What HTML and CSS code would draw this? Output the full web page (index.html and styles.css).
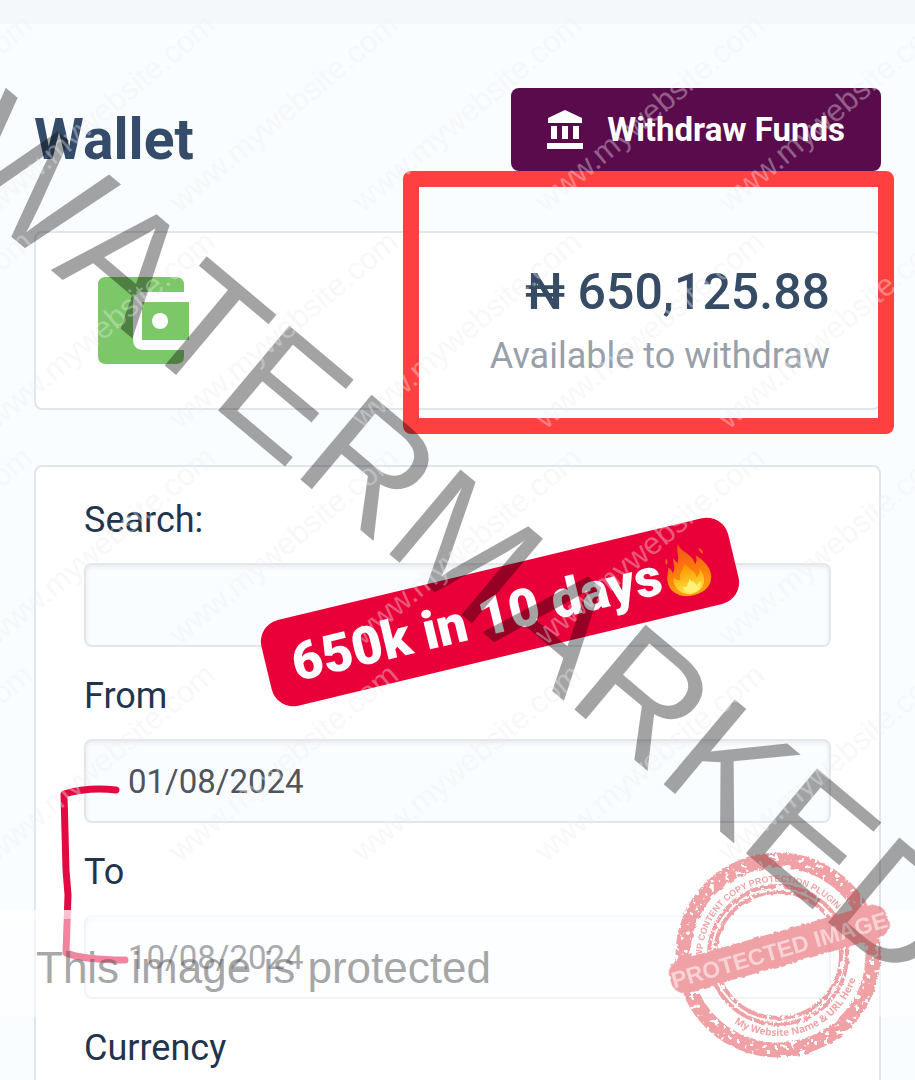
FILE: index.html
```html
<!DOCTYPE html>
<html lang="en">
<head>
<meta charset="utf-8">
<meta name="viewport" content="width=device-width, initial-scale=1">
<title>Wallet</title>
<link rel="stylesheet" href="styles.css">
</head>
<body>
<div class="page">
  <div class="topbar"></div>
  <main class="content">
    <header class="head">
      <h1 class="title">Wallet</h1>
      <button class="withdraw" type="button">
        <svg class="bank" viewBox="0 0 36 40" aria-hidden="true"><path fill="#fff" d="M18 0 35 8v5H1V8zM4 16h6v13H4zm11 0h6v13h-6zM26 16h6v13h-6zM0 33h36v6H0z"/></svg>
        <span>Withdraw Funds</span>
      </button>
    </header>
    <section class="card balance">
      <svg class="wallet" viewBox="0 0 92 87" aria-hidden="true"><path fill="#7cc767" d="M8 0h70q8 0 8 8v7H46q-11 0-11 11v36q0 11 11 11h40v6q0 8-8 8H8q-8 0-8-8V8q0-8 8-8z"/><path fill="#7cc767" fill-rule="evenodd" d="M44 25h47v38H44zM62 36a8 8 0 1 0 .1 0z"/></svg>
      <div class="sum">
        <strong class="amount">₦ 650,125.88</strong>
        <span class="note">Available to withdraw</span>
      </div>
    </section>
    <form class="card filters">
      <label for="q">Search:</label>
      <input id="q" type="text">
      <label for="from">From</label>
      <input id="from" type="text" value="01/08/2024">
      <label for="to">To</label>
      <input id="to" type="text" value="10/08/2024">
      <label for="cur">Currency</label>
      <input id="cur" type="text">
    </form>
  </main>
  <div class="frame"></div>
  <div class="sticker"><span>650k in 10 days</span>
    <svg class="fire" viewBox="0 0 46 54" aria-hidden="true">
      <defs><linearGradient id="fl" x1="0" y1="0" x2="0" y2="1"><stop offset="0" stop-color="#f4511e"/><stop offset=".55" stop-color="#fb7d0c"/><stop offset="1" stop-color="#fda50f"/></linearGradient>
      <linearGradient id="core" x1="0" y1="0" x2="0" y2="1"><stop offset="0" stop-color="#fb8c00"/><stop offset=".6" stop-color="#ffc21f"/><stop offset="1" stop-color="#ffe95a"/></linearGradient></defs>
      <path fill="url(#fl)" d="M20 0c-1 8 12 13 12 24 3-3 3-6 2-9 6 6 11 13 11 21 0 11-9 18-22 18S1 46 1 36c0-7 3-10 4-15 2 2 3 4 3 7 5-6 2-10 4-15 1 3 2 4 3 6 4-7 1-12 5-19zM39 9c3 2 4 4 3 7-2-2-3-4-3-7zM5 12c-2 2-2 4-1 6 2-2 2-4 1-6z"/>
      <path fill="url(#core)" d="M22 20c1 8 9 9 8 17 3-1 5-4 5-8 6 11 0 23-12 23S4 41 8 32c2 2 3 4 6 4-1-7 6-9 8-16z"/>
      <path fill="#fff176" d="M23 36c0 5 5 4 5 9 3-1 4-2 5-4 0 7-4 10-10 10s-9-4-8-8c1 1 2 1 4 1 0-3 4-4 4-8z"/>
    </svg>
  </div>
  <svg class="marks" width="915" height="1080" viewBox="0 0 915 1080">
    <defs>
      <filter id="worn" x="-5%" y="-5%" width="110%" height="110%">
        <feTurbulence type="fractalNoise" baseFrequency=".2" numOctaves="2" seed="4" result="n"/>
        <feDisplacementMap in="SourceGraphic" in2="n" scale="5" result="d"/>
        <feColorMatrix in="n" type="matrix" values="0 0 0 0 0  0 0 0 0 0  0 0 0 0 0  0 0 0 -16 10.600" result="h"/>
        <feComposite in="d" in2="h" operator="in"/>
      </filter>
      <filter id="rough" x="-5%" y="-15%" width="110%" height="130%">
        <feTurbulence type="fractalNoise" baseFrequency=".25" numOctaves="2" seed="8" result="n"/>
        <feDisplacementMap in="SourceGraphic" in2="n" scale="4"/>
      </filter>
      <path id="arcTop" d="M702 958A76 76 0 1 1 853 970"/>
      <path id="arcLow" d="M734 1023A81 81 0 0 0 859 950"/>
      <g id="row">
        <text transform="translate(-186 213) rotate(-40)">www.mywebsite.com</text>
        <text transform="translate(-3 213) rotate(-40)">www.mywebsite.com</text>
        <text transform="translate(180 213) rotate(-40)">www.mywebsite.com</text>
        <text transform="translate(363 213) rotate(-40)">www.mywebsite.com</text>
        <text transform="translate(546 213) rotate(-40)">www.mywebsite.com</text>
        <text transform="translate(729 213) rotate(-40)">www.mywebsite.com</text>
      </g>
    </defs>
    <path class="pen" d="M116 790Q88 787 64 794L66 870 68 895 66 953Q84 960 125 960"/>
    <rect class="veil" y="910" width="915" height="107"/>
    <rect class="veil" y="910" width="915" height="9"/>
    <text class="big" transform="translate(-66 172) rotate(40)">WATERMARKED</text>
    <g class="tiles">
      <use href="#row"/><use href="#row" y="217"/><use href="#row" y="433"/><use href="#row" y="650"/>
    </g>
    <text class="notice" x="36" y="983">This image is protected</text>
    <g class="stamp">
      <circle class="ring" cx="778" cy="955" r="95" filter="url(#worn)"/>
      <circle class="thin" cx="778" cy="955" r="69" filter="url(#worn)"/>
      <circle class="thin" cx="778" cy="955" r="63" filter="url(#worn)"/>
      <text class="plugin"><textPath href="#arcTop">WP CONTENT COPY PROTECTION PLUGIN</textPath></text>
      <text class="site"><textPath href="#arcLow">My Website Name &amp; URL Here</textPath></text>
      <g transform="translate(779 949) rotate(-16)">
        <rect x="-113" y="-17" width="226" height="34" rx="14" filter="url(#rough)"/>
        <text class="band" y="9">PROTECTED IMAGE</text>
      </g>
    </g>
  </svg>
</div>
</body>
</html>
```
FILE: styles.css
```css
* { box-sizing: border-box; }
body { margin: 0; background: #fafdff; font-family: Roboto, sans-serif; color: #22344c; }
.page { position: relative; height: 100vh; overflow: hidden; }
.topbar { height: 24px; background: #f5f8fb; }
.content { padding: 64px 34px 0; }
.head { display: flex; justify-content: space-between; align-items: center; margin-bottom: 60px; }
.title { margin: 0; padding-top: 20px; font-size: 57px; line-height: 62px; font-weight: 700; color: #344b69; }
.withdraw { display: flex; align-items: center; gap: 24px; height: 83px; padding: 0 36px; border: 0; border-radius: 8px; background: #590b4b; color: #fff; font: 700 33px/40px Roboto, sans-serif; }
.bank { width: 36px; height: 40px; }
.card { background: #fff; border: 2px solid #e2e5ea; border-radius: 8px; }
.balance { display: flex; justify-content: space-between; align-items: center; height: 179px; padding: 0 49px 0 62px; margin-bottom: 55px; }
.wallet { width: 92px; height: 87px; }
.sum { display: flex; flex-direction: column; align-items: flex-end; padding-top: 6px; }
.amount { font-size: 50px; line-height: 64px; font-weight: 500; color: #364b64; }
.note { font-size: 36px; line-height: 64px; color: #98a0a9; }
.filters { display: flex; flex-direction: column; padding: 28px 48px; }
.filters label { font-size: 36px; line-height: 50px; margin-bottom: 18px; }
.filters input { width: 100%; height: 84px; margin-bottom: 24px; padding: 0 42px; border: 2px solid #e2e7ec; border-radius: 8px; background: #fafdff; box-shadow: inset 0 2px 4px #e8ecf0; font: 33px Roboto, sans-serif; color: #50545b; }
.frame { position: absolute; left: 403px; top: 171px; width: 491px; height: 263px; border: 16px solid #ff4040; border-radius: 8px; }
.sticker { position: absolute; left: 260px; top: 568px; width: 480px; height: 88px; display: flex; align-items: center; padding: 4px 0 0 26px; gap: 4px; border-radius: 22px; background: #ea0039; color: #fff; font-size: 53px; font-weight: 900; white-space: nowrap; transform: rotate(-13.500deg); }
.fire { width: 46px; height: 54px; }
.marks { position: absolute; left: 0; top: 0; pointer-events: none; }
.pen { fill: none; stroke: #e20a40; stroke-width: 7px; stroke-linecap: round; stroke-linejoin: round; }
.big { font: 161px "Liberation Sans", sans-serif; font-kerning: none; fill: rgba(0, 0, 0, .36); }
.tiles { font: 31px "Liberation Sans", sans-serif; fill: rgba(237, 238, 240, .38); }
.veil { fill: rgba(255, 255, 255, .5); }
.notice { font: 44px "Liberation Sans", sans-serif; fill: rgba(90, 90, 90, .55); }
.stamp { fill: #e0363c; opacity: .46; }
.ring { fill: none; stroke: #e0363c; stroke-width: 15px; }
.thin { fill: none; stroke: #e0363c; stroke-width: 4px; }
.plugin { font: bold 9px "Liberation Sans", sans-serif; }
.site { font: bold 10px "Open Sans", sans-serif; }
.band { font: bold 23px "Liberation Sans", sans-serif; fill: #f3a0a2; text-anchor: middle; }
```
